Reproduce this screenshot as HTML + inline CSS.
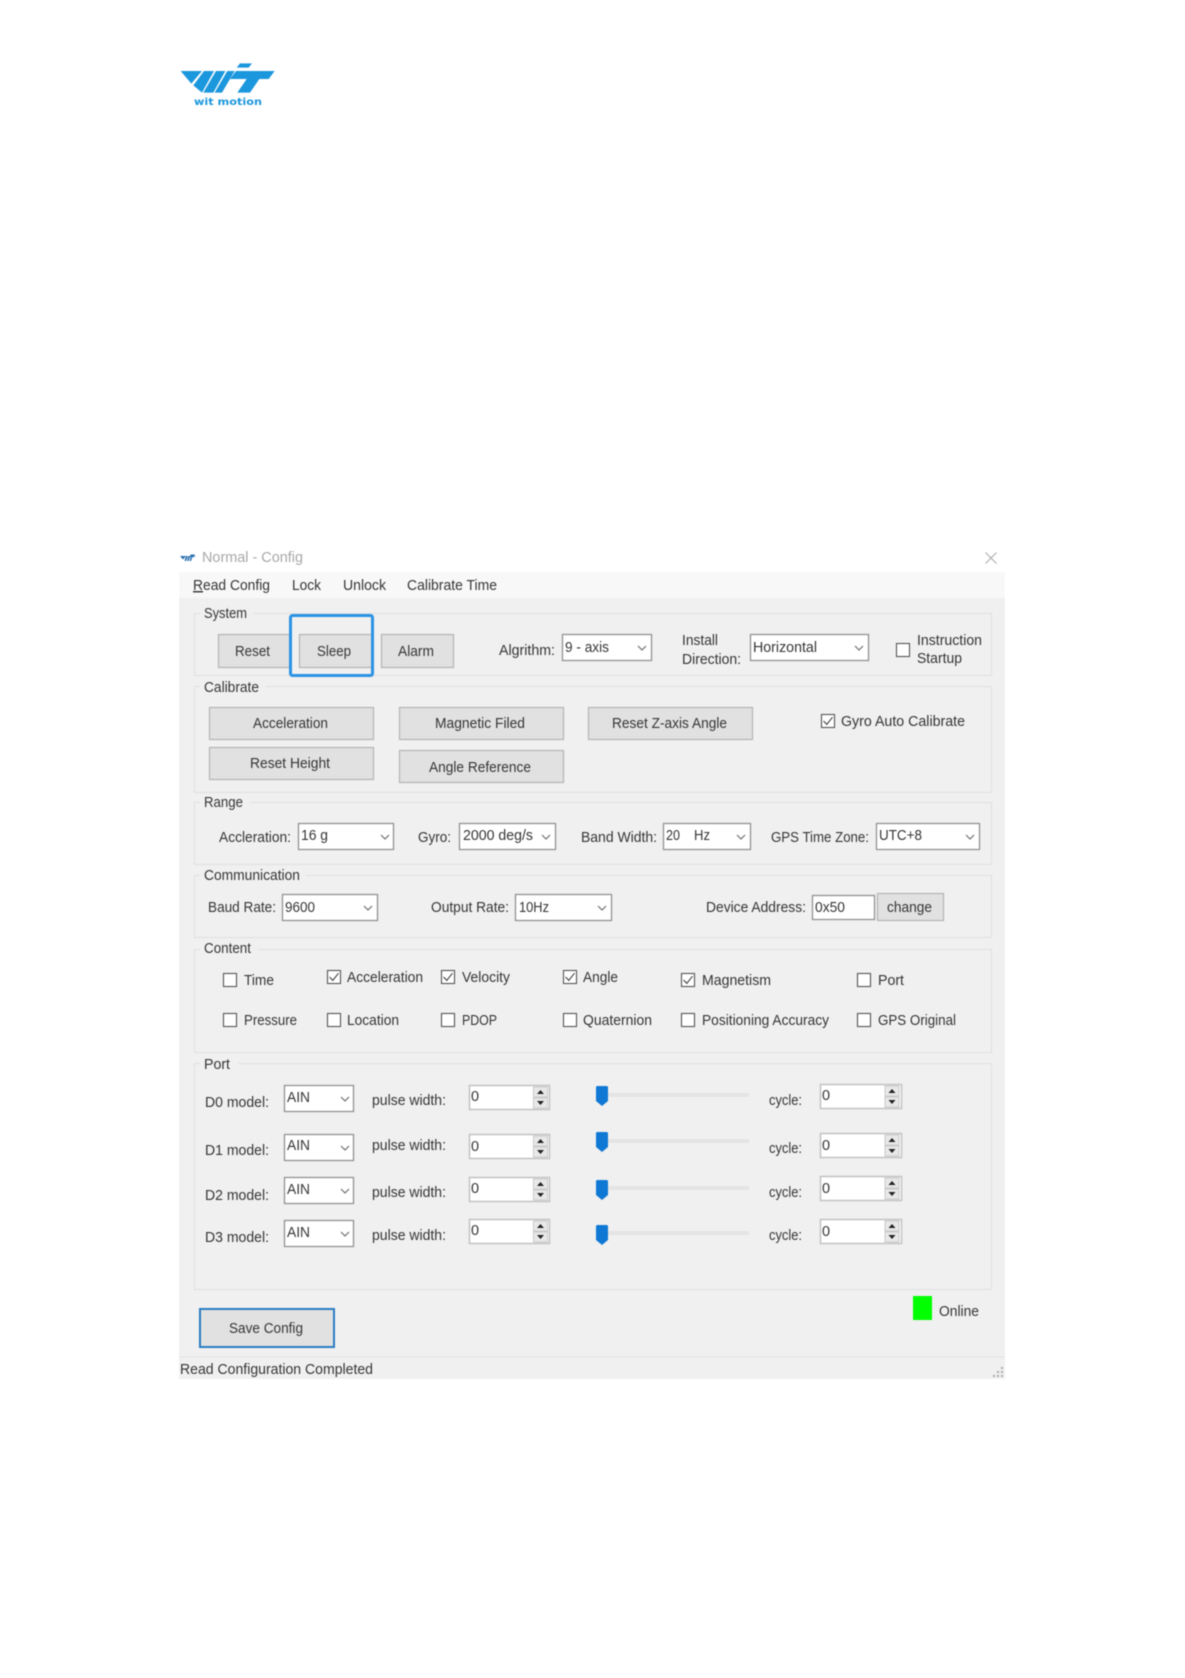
<!DOCTYPE html>
<html>
<head>
<meta charset="utf-8">
<title>Normal - Config</title>
<style>
html,body{margin:0;padding:0;background:#fff;}
body{width:1185px;height:1678px;overflow:hidden;}
svg{display:block;filter:blur(.4px);}
text{font-family:"Liberation Sans",sans-serif;font-size:14.5px;fill:#353535;}
.g{fill:none;stroke:#e2e2e2;stroke-width:1.2;}
.b{fill:#e1e1e1;stroke:#b4b4b4;stroke-width:1.2;}
.s{fill:#fff;stroke:#929292;stroke-width:1.3;}
.n{fill:#fff;stroke:#c2c2c2;stroke-width:1.5;}
.bg{fill:#f0f0f0;}
</style>
</head>
<body>
<svg width="1185" height="1678" viewBox="0 0 1185 1678" xmlns="http://www.w3.org/2000/svg">
<defs>
<g id="ch"><path d="M-4-2 0 2 4-2" fill="none" stroke="#666" stroke-width="1.1"/></g>
<g id="cb"><rect x=".5" y=".5" width="13" height="13" fill="#fff" stroke="#555" stroke-width="1.1"/></g>
<g id="cc"><rect x=".5" y=".5" width="13" height="13" fill="#fff" stroke="#555" stroke-width="1.1"/><path d="M2.5 7 5.8 10.4 11.5 3.2" fill="none" stroke="#444" stroke-width="1.1"/></g>
<g id="sp"><rect x="0" y="0" width="14" height="10" fill="#e8e8e8" stroke="#cacaca"/><rect x="0" y="11" width="14" height="10" fill="#e8e8e8" stroke="#cacaca"/><path d="M3.5 7 7 3 10.5 7Z" fill="#222"/><path d="M3.5 14 7 18 10.5 14Z" fill="#222"/></g>
<g id="th"><path d="M1.5 0H10.5Q12 0 12 1.5V15L6 20 0 15V1.5Q0 0 1.5 0Z" fill="#0f78d4"/></g>
</defs>
<rect width="1185" height="1678" fill="#fff"/>

<!-- logo -->
<g transform="translate(150 40) scale(.33333)" fill="#1b97dd">
<path d="M92 93H156L124 131Z"/>
<path d="M162 93H192L156 158 130 136Z"/>
<path d="M198 93H226L190 158H160Z"/>
<path d="M232 93H254L216 158H194Z"/>
<path d="M270 70H306L296 83H260Z"/>
<path d="M258 93H374L356 117H328L300 158H262L290 117H240Z"/>
</g>
<text x="194" y="105" textLength="68" lengthAdjust="spacingAndGlyphs" style="font-size:10px;font-weight:bold;fill:#1b97dd;font-family:'DejaVu Sans',sans-serif">wit motion</text>

<!-- title bar -->
<g transform="translate(180 553)" fill="#2a6fb0"><path d="M0 3H6L3 6.5ZM6 3H8L6 8H4.5ZM8.5 3H10.5L8.5 8H7ZM11 1.5H15L14 3H16L14 4H12.5L11 8H9.5L11 4H9Z"/></g>
<text x="202" y="562" textLength="101" lengthAdjust="spacingAndGlyphs" style="fill:#a8a8a8">Normal - Config</text>
<path d="M985.5 552.5 996.5 563.5M996.5 552.5 985.5 563.5" stroke="#a9a9a9" stroke-width="1" fill="none"/>

<!-- panel -->
<rect x="179" y="572" width="826" height="807" fill="#f0f0f0"/>
<rect x="179" y="572" width="826" height="26" fill="#f8f8f8"/>
<rect x="179" y="1357" width="826" height="22" fill="#f0f0f0"/>
<path d="M179 1357H1005" stroke="#e3e3e3" stroke-width="1"/>

<!-- menu -->
<text x="193" y="590" textLength="77" lengthAdjust="spacingAndGlyphs"><tspan text-decoration="underline">R</tspan>ead Config</text>
<text x="292" y="590" textLength="29" lengthAdjust="spacingAndGlyphs">Lock</text>
<text x="343" y="590" textLength="43" lengthAdjust="spacingAndGlyphs">Unlock</text>
<text x="407" y="590" textLength="90" lengthAdjust="spacingAndGlyphs">Calibrate Time</text>

<!-- group boxes -->
<rect class="g" x="194.5" y="613.5" width="797" height="62"/>
<rect class="g" x="194.5" y="686.5" width="797" height="106"/>
<rect class="g" x="194.5" y="802.5" width="797" height="62"/>
<rect class="g" x="194.5" y="875.5" width="797" height="62"/>
<rect class="g" x="194.5" y="949.5" width="797" height="103"/>
<rect class="g" x="194.5" y="1063.5" width="797" height="226"/>
<rect class="bg" x="200" y="605" width="54" height="16"/>
<text x="204" y="618" textLength="43" lengthAdjust="spacingAndGlyphs">System</text>
<rect class="bg" x="200" y="678" width="66" height="16"/>
<text x="204" y="692" textLength="55" lengthAdjust="spacingAndGlyphs">Calibrate</text>
<rect class="bg" x="200" y="794" width="50" height="16"/>
<text x="204" y="807" textLength="39" lengthAdjust="spacingAndGlyphs">Range</text>
<rect class="bg" x="200" y="867" width="106" height="16"/>
<text x="204" y="880" textLength="96" lengthAdjust="spacingAndGlyphs">Communication</text>
<rect class="bg" x="200" y="941" width="58" height="16"/>
<text x="204" y="953" textLength="47" lengthAdjust="spacingAndGlyphs">Content</text>
<rect class="bg" x="200" y="1055" width="38" height="16"/>
<text x="204" y="1069" textLength="26" lengthAdjust="spacingAndGlyphs">Port</text>

<!-- system -->
<rect class="b" x="218.5" y="634.5" width="72" height="33"/>
<text x="235" y="656" textLength="35" lengthAdjust="spacingAndGlyphs">Reset</text>
<rect class="b" x="299.5" y="634.5" width="73" height="33"/>
<text x="317" y="656" textLength="34" lengthAdjust="spacingAndGlyphs">Sleep</text>
<rect class="b" x="381.5" y="634.5" width="72" height="33"/>
<text x="398" y="656" textLength="36" lengthAdjust="spacingAndGlyphs">Alarm</text>
<rect x="290.5" y="615.5" width="82" height="60" rx="2" fill="none" stroke="#2b93e4" stroke-width="3"/>
<text x="499" y="655" textLength="56" lengthAdjust="spacingAndGlyphs">Algrithm:</text>
<rect class="s" x="562.5" y="634.5" width="89" height="26"/>
<text x="565" y="652" textLength="44" lengthAdjust="spacingAndGlyphs">9 - axis</text>
<use href="#ch" x="642" y="648"/>
<text x="682" y="645" textLength="36" lengthAdjust="spacingAndGlyphs">Install</text>
<text x="682" y="664" textLength="59" lengthAdjust="spacingAndGlyphs">Direction:</text>
<rect class="s" x="750.5" y="634.5" width="118" height="26"/>
<text x="753" y="652" textLength="64" lengthAdjust="spacingAndGlyphs">Horizontal</text>
<use href="#ch" x="859" y="648"/>
<use href="#cb" x="896" y="643"/>
<text x="917" y="645" textLength="65" lengthAdjust="spacingAndGlyphs">Instruction</text>
<text x="917" y="663" textLength="45" lengthAdjust="spacingAndGlyphs">Startup</text>

<!-- calibrate -->
<rect class="b" x="209.5" y="707.5" width="164" height="32"/>
<text x="253" y="728" textLength="75" lengthAdjust="spacingAndGlyphs">Acceleration</text>
<rect class="b" x="209.5" y="747.5" width="164" height="32"/>
<text x="250" y="768" textLength="80" lengthAdjust="spacingAndGlyphs">Reset Height</text>
<rect class="b" x="399.5" y="707.5" width="164" height="32"/>
<text x="435" y="728" textLength="90" lengthAdjust="spacingAndGlyphs">Magnetic Filed</text>
<rect class="b" x="399.5" y="750.5" width="164" height="32"/>
<text x="429" y="772" textLength="102" lengthAdjust="spacingAndGlyphs">Angle Reference</text>
<rect class="b" x="588.5" y="707.5" width="164" height="32"/>
<text x="612" y="728" textLength="115" lengthAdjust="spacingAndGlyphs">Reset Z-axis Angle</text>
<use href="#cc" x="821" y="714"/>
<text x="841" y="726" textLength="124" lengthAdjust="spacingAndGlyphs">Gyro Auto Calibrate</text>

<!-- range -->
<text x="219" y="842" textLength="72" lengthAdjust="spacingAndGlyphs">Accleration:</text>
<rect class="s" x="298.5" y="823.5" width="95" height="26"/>
<text x="301" y="840" textLength="27" lengthAdjust="spacingAndGlyphs">16 g</text>
<use href="#ch" x="385" y="837"/>
<text x="418" y="842" textLength="33" lengthAdjust="spacingAndGlyphs">Gyro:</text>
<rect class="s" x="459.5" y="823.5" width="96" height="26"/>
<text x="463" y="840" textLength="70" lengthAdjust="spacingAndGlyphs">2000 deg/s</text>
<use href="#ch" x="546" y="837"/>
<text x="581" y="842" textLength="76" lengthAdjust="spacingAndGlyphs">Band Width:</text>
<rect class="s" x="663.5" y="823.5" width="87" height="26"/>
<text x="666" y="840" textLength="14" lengthAdjust="spacingAndGlyphs">20</text>
<text x="694" y="840" textLength="16" lengthAdjust="spacingAndGlyphs">Hz</text>
<use href="#ch" x="741" y="837"/>
<text x="771" y="842" textLength="98" lengthAdjust="spacingAndGlyphs">GPS Time Zone:</text>
<rect class="s" x="876.5" y="823.5" width="103" height="26"/>
<text x="879" y="840" textLength="43" lengthAdjust="spacingAndGlyphs">UTC+8</text>
<use href="#ch" x="970" y="837"/>

<!-- communication -->
<text x="208" y="912" textLength="68" lengthAdjust="spacingAndGlyphs">Baud Rate:</text>
<rect class="s" x="282.5" y="894.5" width="95" height="26"/>
<text x="285" y="912" textLength="30" lengthAdjust="spacingAndGlyphs">9600</text>
<use href="#ch" x="368" y="908"/>
<text x="431" y="912" textLength="78" lengthAdjust="spacingAndGlyphs">Output Rate:</text>
<rect class="s" x="515.5" y="894.5" width="96" height="26"/>
<text x="519" y="912" textLength="30" lengthAdjust="spacingAndGlyphs">10Hz</text>
<use href="#ch" x="602" y="908"/>
<text x="706" y="912" textLength="100" lengthAdjust="spacingAndGlyphs">Device Address:</text>
<rect class="s" x="812.5" y="895.5" width="62" height="24"/>
<text x="815" y="912" textLength="30" lengthAdjust="spacingAndGlyphs">0x50</text>
<rect class="b" x="877.5" y="893.5" width="66" height="27"/>
<text x="887" y="912" textLength="45" lengthAdjust="spacingAndGlyphs">change</text>

<!-- content -->
<use href="#cb" x="223" y="973"/><text x="244" y="985" textLength="30" lengthAdjust="spacingAndGlyphs">Time</text>
<use href="#cc" x="327" y="970"/><text x="347" y="982" textLength="76" lengthAdjust="spacingAndGlyphs">Acceleration</text>
<use href="#cc" x="441" y="970"/><text x="462" y="982" textLength="48" lengthAdjust="spacingAndGlyphs">Velocity</text>
<use href="#cc" x="563" y="970"/><text x="583" y="982" textLength="35" lengthAdjust="spacingAndGlyphs">Angle</text>
<use href="#cc" x="681" y="973"/><text x="702" y="985" textLength="69" lengthAdjust="spacingAndGlyphs">Magnetism</text>
<use href="#cb" x="857" y="973"/><text x="878" y="985" textLength="26" lengthAdjust="spacingAndGlyphs">Port</text>
<use href="#cb" x="223" y="1013"/><text x="244" y="1025" textLength="53" lengthAdjust="spacingAndGlyphs">Pressure</text>
<use href="#cb" x="327" y="1013"/><text x="347" y="1025" textLength="52" lengthAdjust="spacingAndGlyphs">Location</text>
<use href="#cb" x="441" y="1013"/><text x="462" y="1025" textLength="35" lengthAdjust="spacingAndGlyphs">PDOP</text>
<use href="#cb" x="563" y="1013"/><text x="583" y="1025" textLength="69" lengthAdjust="spacingAndGlyphs">Quaternion</text>
<use href="#cb" x="681" y="1013"/><text x="702" y="1025" textLength="127" lengthAdjust="spacingAndGlyphs">Positioning Accuracy</text>
<use href="#cb" x="857" y="1013"/><text x="878" y="1025" textLength="78" lengthAdjust="spacingAndGlyphs">GPS Original</text>

<!-- port row 0 -->
<text x="205" y="1107" textLength="64" lengthAdjust="spacingAndGlyphs">D0 model:</text>
<rect class="s" x="284.5" y="1085.5" width="69" height="26"/>
<text x="287" y="1102" textLength="23" lengthAdjust="spacingAndGlyphs">AIN</text>
<use href="#ch" x="345" y="1099"/>
<text x="372" y="1105" textLength="74" lengthAdjust="spacingAndGlyphs">pulse width:</text>
<rect class="n" x="469.5" y="1085.5" width="80" height="24"/>
<text x="471" y="1101">0</text>
<use href="#sp" x="533.5" y="1087"/>
<rect x="608" y="1093" width="141" height="4" fill="#e4e4e4"/>
<use href="#th" x="596" y="1086"/>
<text x="769" y="1105" textLength="33" lengthAdjust="spacingAndGlyphs">cycle:</text>
<rect class="n" x="820.5" y="1084.5" width="81" height="24"/>
<text x="822" y="1100">0</text>
<use href="#sp" x="885" y="1086"/>

<!-- port row 1 -->
<text x="205" y="1155" textLength="64" lengthAdjust="spacingAndGlyphs">D1 model:</text>
<rect class="s" x="284.5" y="1134.5" width="69" height="26"/>
<text x="287" y="1150" textLength="23" lengthAdjust="spacingAndGlyphs">AIN</text>
<use href="#ch" x="345" y="1148"/>
<text x="372" y="1150" textLength="74" lengthAdjust="spacingAndGlyphs">pulse width:</text>
<rect class="n" x="469.5" y="1134.5" width="80" height="24"/>
<text x="471" y="1151">0</text>
<use href="#sp" x="533.5" y="1136"/>
<rect x="608" y="1139" width="141" height="4" fill="#e4e4e4"/>
<use href="#th" x="596" y="1132"/>
<text x="769" y="1153" textLength="33" lengthAdjust="spacingAndGlyphs">cycle:</text>
<rect class="n" x="820.5" y="1133.5" width="81" height="24"/>
<text x="822" y="1150">0</text>
<use href="#sp" x="885" y="1135"/>

<!-- port row 2 -->
<text x="205" y="1200" textLength="64" lengthAdjust="spacingAndGlyphs">D2 model:</text>
<rect class="s" x="284.5" y="1177.5" width="69" height="26"/>
<text x="287" y="1194" textLength="23" lengthAdjust="spacingAndGlyphs">AIN</text>
<use href="#ch" x="345" y="1191"/>
<text x="372" y="1197" textLength="74" lengthAdjust="spacingAndGlyphs">pulse width:</text>
<rect class="n" x="469.5" y="1177.5" width="80" height="24"/>
<text x="471" y="1193">0</text>
<use href="#sp" x="533.5" y="1179"/>
<rect x="608" y="1186" width="141" height="4" fill="#e4e4e4"/>
<use href="#th" x="596" y="1180"/>
<text x="769" y="1197" textLength="33" lengthAdjust="spacingAndGlyphs">cycle:</text>
<rect class="n" x="820.5" y="1176.5" width="81" height="24"/>
<text x="822" y="1193">0</text>
<use href="#sp" x="885" y="1178"/>

<!-- port row 3 -->
<text x="205" y="1242" textLength="64" lengthAdjust="spacingAndGlyphs">D3 model:</text>
<rect class="s" x="284.5" y="1220.5" width="69" height="26"/>
<text x="287" y="1237" textLength="23" lengthAdjust="spacingAndGlyphs">AIN</text>
<use href="#ch" x="345" y="1234"/>
<text x="372" y="1240" textLength="74" lengthAdjust="spacingAndGlyphs">pulse width:</text>
<rect class="n" x="469.5" y="1219.5" width="80" height="24"/>
<text x="471" y="1235">0</text>
<use href="#sp" x="533.5" y="1221"/>
<rect x="608" y="1231" width="141" height="4" fill="#e4e4e4"/>
<use href="#th" x="596" y="1225"/>
<text x="769" y="1240" textLength="33" lengthAdjust="spacingAndGlyphs">cycle:</text>
<rect class="n" x="820.5" y="1219.5" width="81" height="24"/>
<text x="822" y="1236">0</text>
<use href="#sp" x="885" y="1221"/>

<!-- footer -->
<rect x="913" y="1296" width="19" height="24" fill="#00ff00"/>
<text x="939" y="1316" textLength="40" lengthAdjust="spacingAndGlyphs">Online</text>
<rect x="200" y="1309" width="134" height="38" fill="#e1e1e1" stroke="#2b7cc4" stroke-width="2"/>
<text x="229" y="1333" textLength="74" lengthAdjust="spacingAndGlyphs">Save Config</text>
<text x="180" y="1374" textLength="193" lengthAdjust="spacingAndGlyphs">Read Configuration Completed</text>
<g fill="#a9a9a9"><rect x="1001" y="1367" width="2" height="2"/><rect x="1001" y="1371" width="2" height="2"/><rect x="1001" y="1375" width="2" height="2"/><rect x="997" y="1371" width="2" height="2"/><rect x="997" y="1375" width="2" height="2"/><rect x="993" y="1375" width="2" height="2"/></g>
</svg>
</body>
</html>
